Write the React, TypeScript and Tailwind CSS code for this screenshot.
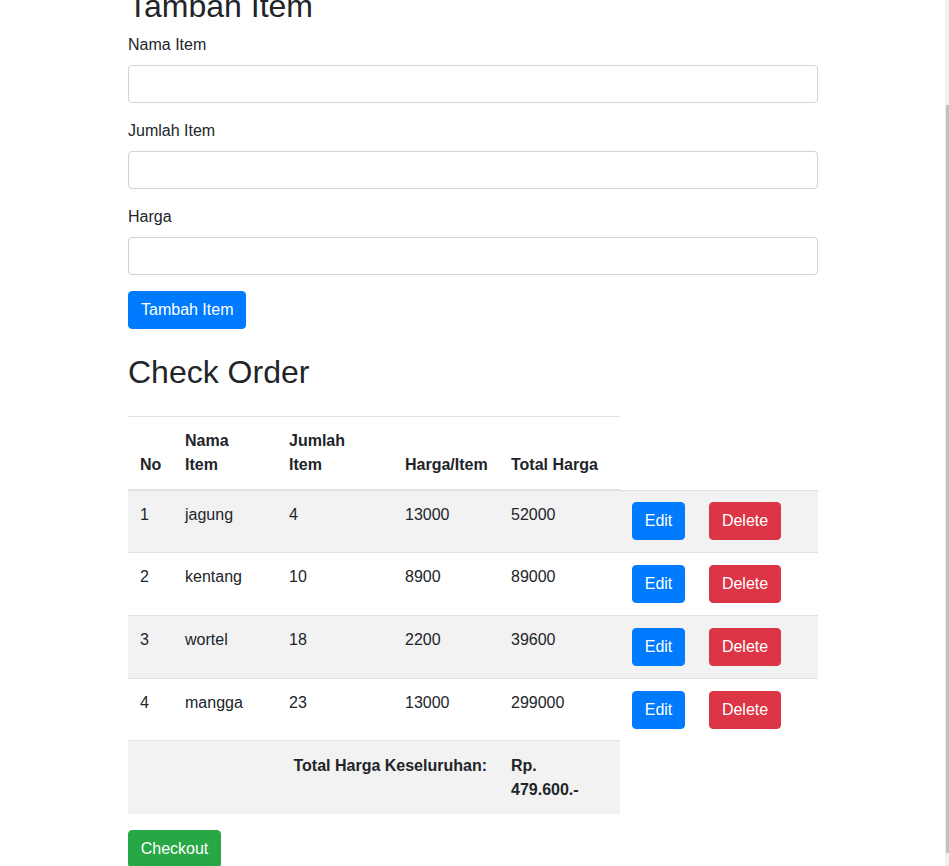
import React from "react";

const rows = [
  { no: 1, nama: "jagung", jumlah: 4, harga: 13000, total: 52000 },
  { no: 2, nama: "kentang", jumlah: 10, harga: 8900, total: 89000 },
  { no: 3, nama: "wortel", jumlah: 18, harga: 2200, total: 39600 },
  { no: 4, nama: "mangga", jumlah: 23, harga: 13000, total: 299000 },
];

export default function App() {
  const th =
    "p-[12px] align-bottom text-left font-bold whitespace-nowrap border-t border-b-2 border-[#dee2e6] leading-[24px]";
  const td = "p-[12px] align-top border-t border-[#dee2e6] leading-[24px]";
  const tdTotal = "px-[12px] pt-[13px] pb-[12px] align-top border-t border-[#dee2e6] leading-[24px] font-bold";
  return (
    <div
      className="relative h-[866px] w-[949px] overflow-hidden bg-white text-[16px] text-[#212529]"
      style={{ fontFamily: '"Liberation Sans", Arial, sans-serif' }}
    >
      <div className="ml-[128px] w-[690px]">
        <h2 className="mt-[-13px] mb-[8px] text-[32px] leading-[38px] font-normal">Tambah Item</h2>
        {["Nama Item", "Jumlah Item", "Harga"].map((l) => (
          <div key={l} className="mb-[16px]">
            <label className="mb-[8px] block leading-[24px]">{l}</label>
            <input
              type="text"
              className="block h-[38px] w-full rounded-[4px] border border-[#ced4da] bg-white px-[12px]"
            />
          </div>
        ))}
        <button className="h-[38px] rounded-[4px] border border-[#007bff] bg-[#007bff] px-[12px] leading-[24px] text-white">
          Tambah Item
        </button>
        <h2 className="mt-[24px] mb-[25px] text-[32px] leading-[38px] font-normal">Check Order</h2>
        <table className="w-full table-fixed border-collapse">
          <colgroup>
            <col className="w-[45px]" />
            <col className="w-[104px]" />
            <col className="w-[116px]" />
            <col className="w-[106px]" />
            <col className="w-[121px]" />
            <col className="w-[77px]" />
            <col className="w-[121px]" />
          </colgroup>
          <thead>
            <tr>
              <th className={th}>No</th>
              <th className={th}>
                Nama
                <br />
                Item
              </th>
              <th className={th}>
                Jumlah
                <br />
                Item
              </th>
              <th className={th}>Harga/Item</th>
              <th className={th}>Total Harga</th>
            </tr>
          </thead>
          <tbody>
            {rows.map((r, i) => (
              <tr key={r.no} className={i % 2 === 0 ? "bg-[#f2f2f2]" : ""}>
                <td className={td}>{r.no}</td>
                <td className={td}>{r.nama}</td>
                <td className={td}>{r.jumlah}</td>
                <td className={td}>{r.harga}</td>
                <td className={td}>{r.total}</td>
                <td className={td}>
                  <div className={i === 0 ? "-mt-[1px] flex" : "flex"}>
                    <button className="h-[38px] w-[53px] rounded-[4px] border border-[#007bff] bg-[#007bff] leading-[24px] text-white">
                      Edit
                    </button>
                  </div>
                </td>
                <td className={td}>
                  <div className={i === 0 ? "-mt-[1px] flex" : "flex"}>
                    <button className="h-[38px] w-[72px] rounded-[4px] border border-[#dc3545] bg-[#dc3545] leading-[24px] text-white">
                      Delete
                    </button>
                  </div>
                </td>
              </tr>
            ))}
            <tr className="bg-[#f2f2f2]">
              <td colSpan={4} className={tdTotal + " text-right"}>
                Total Harga Keseluruhan:
              </td>
              <td className={tdTotal}>
                Rp.
                <br />
                479.600.-
              </td>
            </tr>
          </tbody>
        </table>
        <button className="mt-[16px] h-[38px] w-[93px] rounded-[4px] border border-[#28a745] bg-[#28a745] leading-[24px] text-white">
          Checkout
        </button>
      </div>
      <div className="absolute top-0 right-0 h-full w-[4px] bg-[#f1f1f1]">
        <div className="mt-[105px] ml-[1px] h-[748px] w-[3px] bg-[#c1c1c1]" />
      </div>
    </div>
  );
}
